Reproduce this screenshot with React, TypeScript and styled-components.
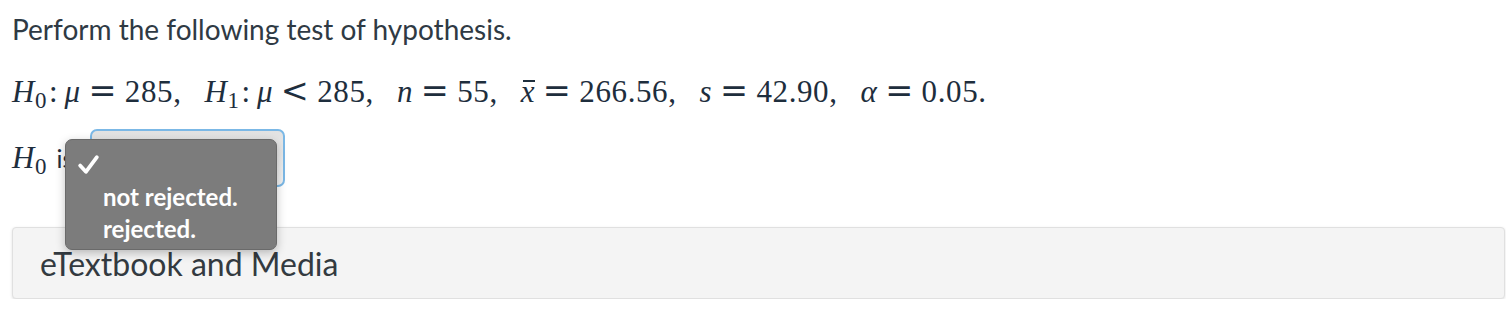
import React from "react"
import styled, { createGlobalStyle } from "styled-components"

const GlobalStyle = createGlobalStyle`
  html, body {
    margin: 0;
    padding: 0;
    background: #ffffff;
  }
  body {
    font-family: Lato, "Liberation Sans", sans-serif;
  }
`

// page
const Page = styled.div`
  padding: 11px 1px 0 12px;
  display: flex;
  flex-direction: column;
`

const Title = styled.p`
  margin: 0;
  font-size: 28px;
  line-height: 36px;
  color: #2f3a44;
`

// math
const MathLine = styled.div`
  margin-top: 24px;
  font-family: "Liberation Serif", "Times New Roman", serif;
  font-size: 31px;
  line-height: 40px;
  color: #1e2e3d;
  white-space: nowrap;
`

const V = styled.i`
  font-style: italic;
`

const Sub = styled.sub`
  font-size: 0.74em;
  vertical-align: -0.24em;
  line-height: 0;
  margin-left: 0.03em;
`

const Colon = styled.span`
  margin: 0 0.22em 0 0.08em;
`

const Rel = styled.span`
  font-family: "DejaVu Serif", "Liberation Serif", serif;
  font-size: 1.08em;
  margin: 0 0.25em;
`

const Gap = styled.span`
  display: inline-block;
  width: 0.74em;
`

const Num = styled.span`
  letter-spacing: 0.02em;
`

const Bar = styled.span`
  position: relative;
  font-style: italic;
  &::before {
    content: "";
    position: absolute;
    left: 0.08em;
    right: 0;
    top: 0.19em;
    height: 2.5px;
    background: currentColor;
  }
`

// answer row
const AnswerRow = styled.div`
  margin-top: 17px;
  display: flex;
  align-items: center;
  font-family: "Liberation Serif", "Times New Roman", serif;
  font-size: 31px;
  color: #1e2e3d;
`

const Label = styled.span`
  width: 78px;
`

const SmallWord = styled.span`
  font-family: Lato, "Liberation Sans", sans-serif;
  font-size: 25px;
  margin-left: 10px;
`

const SelectWrap = styled.div`
  position: relative;
`

const SelectBox = styled.div`
  width: 191px;
  height: 54px;
  border: 2px solid #7bb8e6;
  border-radius: 7px;
  background: linear-gradient(#e2e2e2, #f2f2f2);
`

const Menu = styled.ul`
  position: absolute;
  left: -25px;
  top: 10px;
  width: 212px;
  margin: 0;
  padding: 8px 0 5px;
  box-sizing: border-box;
  list-style: none;
  background: #7c7c7c;
  border: 1px solid #6a6a6a;
  border-radius: 7px;
  box-shadow: 0 3px 10px rgba(0, 0, 0, 0.25);
  font-family: Lato, "Liberation Sans", sans-serif;
  font-weight: 700;
  font-size: 24px;
  color: #ffffff;
  z-index: 2;
`

const Item = styled.li`
  display: flex;
  align-items: center;
  height: 32px;
  padding-left: 37px;
`

const CheckItem = styled.li`
  height: 32px;
  padding-left: 11px;
  display: flex;
  align-items: center;
`

// media panel
const MediaPanel = styled.div`
  margin-top: 40px;
  height: 70px;
  display: flex;
  align-items: center;
  padding-left: 27px;
  background: #f4f4f4;
  border: 1px solid #e0e0e0;
  border-radius: 4px;
  box-shadow: 0 1px 3px rgba(0, 0, 0, 0.12);
  font-size: 32px;
  color: #333a40;
`

const Check = () => (
  <svg width="23" height="21" viewBox="0 0 22 20">
    <path d="M3 11 L8.5 17 L19 3" fill="none" stroke="#fff" strokeWidth="3.6" strokeLinecap="round" strokeLinejoin="round" />
  </svg>
)

export default function App() {
  return (
    <>
      <GlobalStyle />
      <Page>
        <Title>Perform the following test of hypothesis.</Title>
        <MathLine>
          <V>H</V><Sub>0</Sub><Colon>:</Colon><V>μ</V><Rel>=</Rel><Num>285,</Num><Gap />
          <V>H</V><Sub>1</Sub><Colon>:</Colon><V>μ</V><Rel>&lt;</Rel><Num>285,</Num><Gap />
          <V>n</V><Rel>=</Rel><Num>55,</Num><Gap />
          <Bar>x</Bar><Rel>=</Rel><Num>266.56,</Num><Gap />
          <V>s</V><Rel>=</Rel><Num>42.90,</Num><Gap />
          <V>α</V><Rel>=</Rel><Num>0.05.</Num>
        </MathLine>
        <AnswerRow>
          <Label>
            <V>H</V><Sub>0</Sub><SmallWord>is</SmallWord>
          </Label>
          <SelectWrap>
            <SelectBox />
            <Menu>
              <CheckItem><Check /></CheckItem>
              <Item>not rejected.</Item>
              <Item>rejected.</Item>
            </Menu>
          </SelectWrap>
        </AnswerRow>
        <MediaPanel>eTextbook and Media</MediaPanel>
      </Page>
    </>
  )
}
